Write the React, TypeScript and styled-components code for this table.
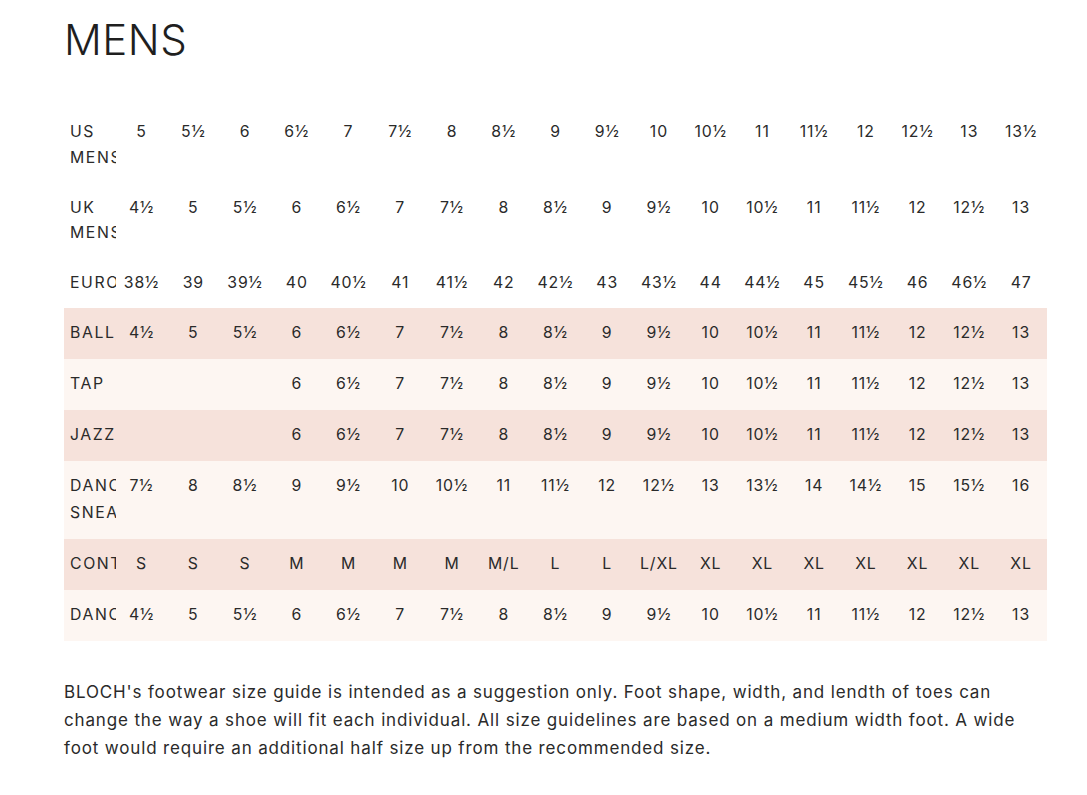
import React from "react";
import styled, { createGlobalStyle } from "styled-components";

const GlobalStyle = createGlobalStyle`
  html, body {
    margin: 0;
    padding: 0;
    background: #ffffff;
  }
  body {
    font-family: Inter, "DejaVu Sans", sans-serif;
    color: #222222;
  }
`;

const Page = styled.main`
  display: flex;
  flex-direction: column;
  padding: 14px 0 0 64px;
  width: 983px;
`;

const Title = styled.h1`
  margin: 0;
  font-size: 42px;
  line-height: 52px;
  font-weight: 300;
  letter-spacing: 0.5px;
  color: #1f1f1f;
`;

const Table = styled.table`
  margin-top: 41px;
  width: 983px;
  border-collapse: collapse;
  table-layout: fixed;
  font-size: 15.8px;
  letter-spacing: 0.9px;
  color: #2a2a2a;
`;

type Tone = "plain" | "pink" | "light";

const toneBg: Record<Tone, string> = {
  plain: "transparent",
  pink: "#f6e2db",
  light: "#fdf6f2",
};

const Row = styled.tr<{ $tone: Tone }>`
  background: ${(p) => toneBg[p.$tone]};
  line-height: ${(p) => (p.$tone === "plain" ? "25.5px" : "26.5px")};
`;

const Label = styled.th`
  text-align: left;
  font-weight: 400;
  letter-spacing: 1.6px;
  padding: 12.25px 0 12.25px 6px;
  overflow: hidden;
  vertical-align: top;
  white-space: normal;
`;

const Cell = styled.td`
  text-align: center;
  padding: 12.25px 0;
  vertical-align: top;
  white-space: nowrap;
`;

const Note = styled.p`
  margin: 37px 0 0 0;
  font-size: 17px;
  letter-spacing: 0.85px;
  line-height: 28px;
  color: #2a2a2a;
  width: 983px;
`;

const uk = ["4½", "5", "5½", "6", "6½", "7", "7½", "8", "8½", "9", "9½", "10", "10½", "11", "11½", "12", "12½", "13"];

const rows: { label: string; tone: Tone; values: string[] }[] = [
  { label: "US MENS", tone: "plain", values: ["5", "5½", "6", "6½", "7", "7½", "8", "8½", "9", "9½", "10", "10½", "11", "11½", "12", "12½", "13", "13½"] },
  { label: "UK MENS", tone: "plain", values: uk },
  { label: "EURO", tone: "plain", values: ["38½", "39", "39½", "40", "40½", "41", "41½", "42", "42½", "43", "43½", "44", "44½", "45", "45½", "46", "46½", "47"] },
  { label: "BALLET", tone: "pink", values: uk },
  { label: "TAP", tone: "light", values: ["", "", "", ...uk.slice(3)] },
  { label: "JAZZ", tone: "pink", values: ["", "", "", ...uk.slice(3)] },
  { label: "DANCE SNEAKER", tone: "light", values: ["7½", "8", "8½", "9", "9½", "10", "10½", "11", "11½", "12", "12½", "13", "13½", "14", "14½", "15", "15½", "16"] },
  { label: "CONTEMPORARY", tone: "pink", values: ["S", "S", "S", "M", "M", "M", "M", "M/L", "L", "L", "L/XL", "XL", "XL", "XL", "XL", "XL", "XL", "XL"] },
  { label: "DANCEWEAR", tone: "light", values: uk },
];

export default function App() {
  return (
    <>
      <GlobalStyle />
      <Page>
        <Title>MENS</Title>
        <Table>
          <tbody>
            {rows.map((r) => (
              <Row key={r.label} $tone={r.tone}>
                <Label>{r.label}</Label>
                {r.values.map((v, i) => (
                  <Cell key={i}>{v}</Cell>
                ))}
              </Row>
            ))}
          </tbody>
        </Table>
        <Note>
          BLOCH's footwear size guide is intended as a suggestion only. Foot shape, width, and lendth of toes can
          change the way a shoe will fit each individual. All size guidelines are based on a medium width foot. A wide
          foot would require an additional half size up from the recommended size.
        </Note>
      </Page>
    </>
  );
}
